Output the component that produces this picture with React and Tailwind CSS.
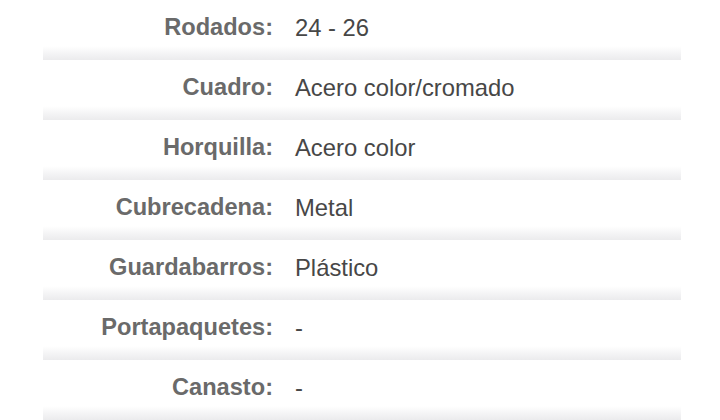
import React from "react";

const rows = [
  ["Rodados:", "24 - 26"],
  ["Cuadro:", "Acero color/cromado"],
  ["Horquilla:", "Acero color"],
  ["Cubrecadena:", "Metal"],
  ["Guardabarros:", "Plástico"],
  ["Portapaquetes:", "-"],
  ["Canasto:", "-"],
];

export default function App() {
  return (
    <div className="w-[720px] h-[420px] bg-white overflow-hidden" style={{ fontFamily: '"Liberation Sans", Arial, sans-serif' }}>
      <div className="ml-[43px] w-[638px] flex flex-col">
        {rows.map(([k, v]) => (
          <div key={k} className="h-[60px] flex flex-col">
            <div className="flex-1 flex items-center pt-[10px] leading-none">
              <div className="w-[230px] text-right font-bold text-[23.6px] text-[#6a6a6a]">{k}</div>
              <div className="ml-[22px] text-[23.8px] text-[#474747]">{v}</div>
            </div>
            <div className="h-[14px] bg-gradient-to-b from-white to-[#ebebed]" />
          </div>
        ))}
      </div>
    </div>
  );
}
